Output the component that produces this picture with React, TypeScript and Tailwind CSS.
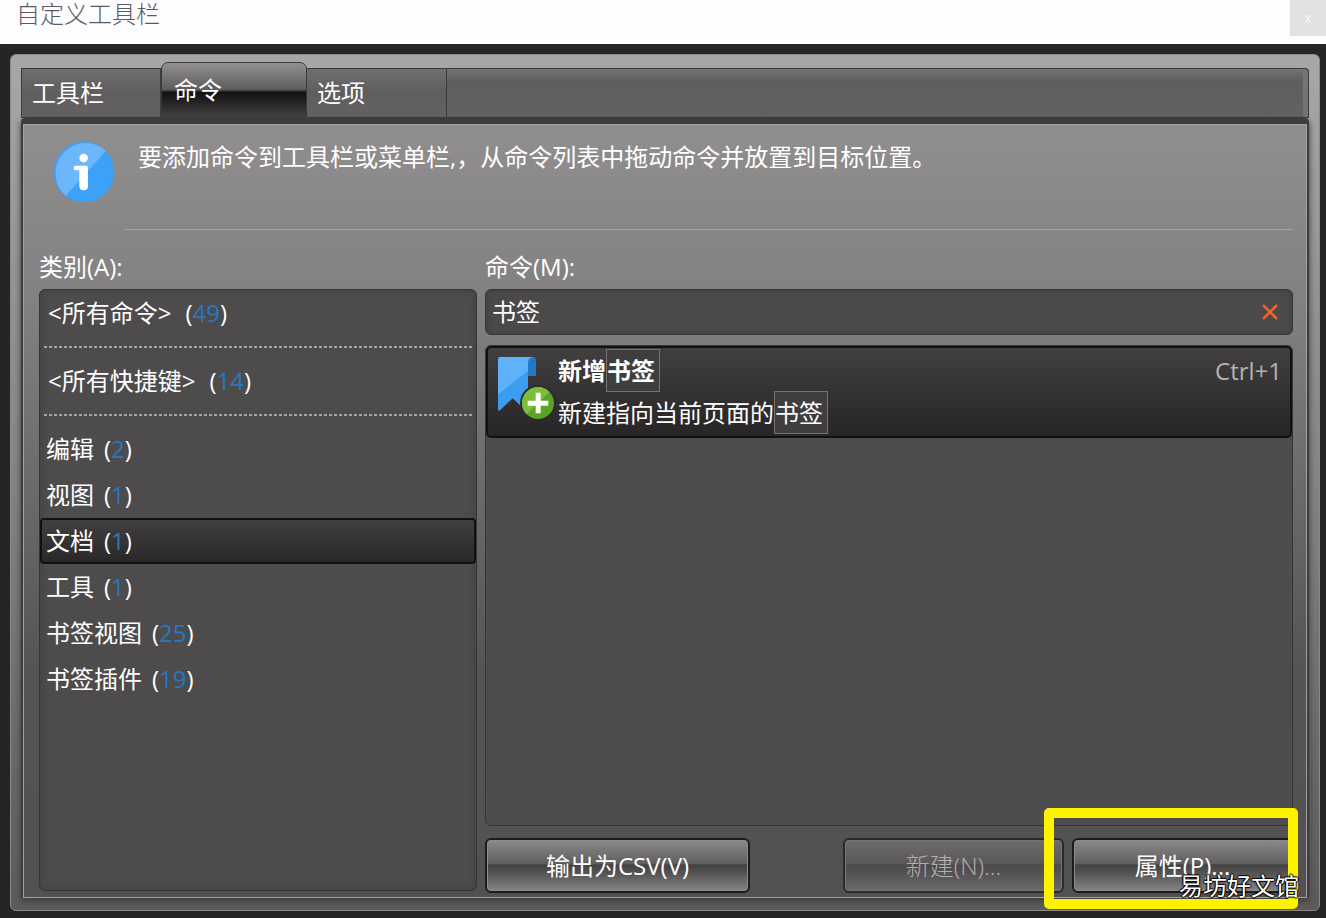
import { useState } from "react"
import clsx from "clsx"

const tabs = ["工具栏", "命令", "选项"]

const allGroups = [
  { name: "<所有命令>", count: 49 },
  { name: "<所有快捷键>", count: 14 },
]

const categories = [
  { name: "编辑", count: 2 },
  { name: "视图", count: 1 },
  { name: "文档", count: 1 },
  { name: "工具", count: 1 },
  { name: "书签视图", count: 25 },
  { name: "书签插件", count: 19 },
]

function InfoIcon() {
  return (
    <svg viewBox="160 423 186 186" className="size-[62px] shrink-0" aria-hidden="true">
      <circle cx="253" cy="516" r="91" fill="#3ba2f8" />
      <path d="M319 452 L198 588 A91 91 0 0 1 319 452 Z" fill="#6cb6fc" />
      <circle cx="252" cy="474" r="13" fill="#fff" />
      <path d="M228 497 H259 Q265 497 265 503 V558 Q265 571 252 571 Q239 571 239 558 V511 H228 Q222 511 222 504 Q222 497 228 497 Z" fill="#fff" />
    </svg>
  )
}

function AddBookmarkIcon() {
  return (
    <svg viewBox="48 42 180 198" className="h-[66px] w-[60px] shrink-0" aria-hidden="true">
      <path d="M143 48 H158 Q168 48 168 60 V105 H143 Z" fill="#2478c8" />
      <path d="M60 48 H158 Q144 50 144 66 V215 L98 172 L60 208 Q54 211 54 205 V56 Q54 48 60 48 Z" fill="#3a9df0" />
      <path d="M60 48 H158 Q144 50 144 66 V90 L54 160 V56 Q54 48 60 48 Z" fill="#5fb2fa" />
      <circle cx="174" cy="186" r="54" fill="#2d2b2b" />
      <circle cx="174" cy="186" r="48" fill="#5aa325" />
      <path d="M140 220 A48 48 0 0 1 208 152 Z" fill="#7bbd3c" />
      <path d="M167 155 H182 V179 H205 V194 H182 V217 H167 V194 H143 V179 H167 Z" fill="#fff" />
    </svg>
  )
}

type CategoryRowProps = {
  name: string
  count: number
  wide?: boolean
  selected: boolean
  onSelect: (name: string) => void
}

function CategoryRow({ name, count, wide, selected, onSelect }: CategoryRowProps) {
  return (
    <button
      type="button"
      aria-pressed={selected}
      onClick={() => onSelect(name)}
      className={clsx(
        "flex h-[46px] w-full items-center rounded-[4px] border-2 text-left whitespace-pre",
        wide ? "gap-3.5 pl-1.5" : "gap-2.5 pl-1",
        selected ? "border-[#121010] bg-linear-to-b from-[#413f40] to-[#292727]" : "border-transparent"
      )}
    >
      <span>{name}</span>
      <span>
        (<span className="text-[#2878c0]">{count}</span>)
      </span>
    </button>
  )
}

function DottedRule() {
  return (
    <div className="flex h-[22px] items-center px-1">
      <div className="h-0.5 w-full bg-[repeating-linear-gradient(90deg,#a5a4a4_0_3px,transparent_3px_5px)]" />
    </div>
  )
}

function Match({ children }: { children: string }) {
  return <mark className="border border-[#747273] bg-[#3f3d3e] py-1 pr-1 text-white">{children}</mark>
}

const glossy =
  "h-[55px] rounded-[6px] border-2 border-[#1d1b1c] bg-[linear-gradient(180deg,#8b898a_0%,#605e5f_46%,#434142_49%,#555354_65%,#858384_100%)] shadow-[inset_0_0_0_1px_#8d8b8c]"

export default function App() {
  const [tab, setTab] = useState("命令")
  const [category, setCategory] = useState("文档")
  const [query, setQuery] = useState("书签")

  return (
    <div className="flex min-h-screen flex-col bg-[#262424] font-['Open_Sans','Noto_Sans_CJK_SC',sans-serif] text-2xl leading-8 text-white">
      <header className="flex h-11 items-start justify-between bg-[#fdfcfe] pl-4">
        <h1 className="leading-7 font-light text-[#5c5a5c]">自定义工具栏</h1>
        <button type="button" aria-label="关闭" className="h-9 w-9 bg-[#e2e1e3] text-sm text-[#f8f8f8]">
          x
        </button>
      </header>

      <main className="mt-2.5 mr-1.5 mb-[7px] ml-2.5 flex grow flex-col rounded-[6px] border border-[#8a8889] bg-linear-to-b from-[#a8a6a8] via-[#858384] to-[#5c5a5b] px-2.5 pt-[7px] pb-3">
        <div role="tablist" className="flex items-end">
          {tabs.map((name) => (
            <button
              key={name}
              type="button"
              role="tab"
              aria-selected={tab === name}
              onClick={() => setTab(name)}
              className={clsx(
                "border text-left",
                tab === name
                  ? "h-14 w-[146px] rounded-t-[7px] border-[#3c3a3b] bg-[linear-gradient(180deg,#929091_0%,#5e5c5d_49%,#141212_54%,#211f20_70%,#444243_100%)] pl-3"
                  : "h-[50px] w-[140px] border-[#3c3a3b] bg-linear-to-b from-[#6f6d6e] via-[#5f5d5e] to-[#636162] pl-2.5 not-first:border-l-0"
              )}
            >
              {name}
            </button>
          ))}
          <div className="h-[50px] grow rounded-tr-[4px] border border-l-0 border-[#3c3a3b] bg-linear-to-b from-[#757374] via-[#5f5d5e] via-25% to-[#636162] shadow-[inset_-5px_0_0_#757374]" />
        </div>

        <section className="flex grow flex-col rounded-t-[4px] border-x-2 border-t-[6px] border-[#3d3b3b] shadow-[0_3px_6px_#3d3b3b]">
          <div className="flex grow flex-col border border-[#a3a1a2] bg-[linear-gradient(180deg,#908e8f_0%,#828081_23%,#565455_70%,#525051_100%)] pr-[13px] pb-1 pl-[15px]">
            <div className="flex gap-[9px] pt-4 pl-3.5">
              <InfoIcon />
              <p className="grow border-b border-[#a5a3a4] pb-14 pl-3.5">
                要添加命令到工具栏或菜单栏,，从命令列表中拖动命令并放置到目标位置。
              </p>
            </div>

            <div className="grid grow grid-cols-[438fr_808fr] gap-x-2 pt-[21px]">
              <div className="flex flex-col pb-0.5">
                <h2 className="pb-1.5">类别(A):</h2>
                <div className="grow rounded-[6px] border border-[#363435] bg-[#4d4b4c] shadow-[inset_0_0_6px_#403e3f]">
                  {allGroups.map((item) => (
                    <div key={item.name}>
                      <CategoryRow {...item} wide selected={category === item.name} onSelect={setCategory} />
                      <DottedRule />
                    </div>
                  ))}
                  {categories.map((item) => (
                    <CategoryRow key={item.name} {...item} selected={category === item.name} onSelect={setCategory} />
                  ))}
                </div>
              </div>

              <div className="flex flex-col">
                <label htmlFor="search" className="pb-1.5">
                  命令(M):
                </label>
                <div className="flex h-[46px] items-center rounded-[6px] border border-[#363435] bg-[#4b494a] shadow-[inset_0_0_6px_#403e3f]">
                  <input
                    id="search"
                    value={query}
                    onChange={(e) => setQuery(e.target.value)}
                    className="min-w-0 grow bg-transparent pl-1.5 outline-none"
                  />
                  <button type="button" aria-label="清除" onClick={() => setQuery("")} className="px-3.5">
                    <svg viewBox="0 0 16 16" className="size-4" aria-hidden="true">
                      <path d="M1 1 L15 15 M15 1 L1 15" stroke="#f0622a" strokeWidth="2.6" />
                    </svg>
                  </button>
                </div>

                <div className="mt-2.5 grow rounded-[6px] border border-[#363435] bg-[#4e4c4d]">
                  <button
                    type="button"
                    className="flex h-[92px] w-full items-start gap-0.5 rounded-[5px] border-2 border-[#121010] bg-linear-to-b from-[#413f40] to-[#272525] pt-[7px] pr-2 pl-2 text-left"
                  >
                    <AddBookmarkIcon />
                    <span className="flex grow flex-col gap-2.5">
                      <span className="font-bold">
                        新增<Match>书签</Match>
                      </span>
                      <span>
                        新建指向当前页面的<Match>书签</Match>
                      </span>
                    </span>
                    <kbd className="font-['Open_Sans',sans-serif] text-[#b5b3b4]">Ctrl+1</kbd>
                  </button>
                </div>

                <div className="mt-3 flex">
                  <button type="button" className={clsx(glossy, "w-[265px]")}>
                    输出为CSV(V)
                  </button>
                  <button
                    type="button"
                    disabled
                    className="mr-2 ml-auto h-[55px] w-[221px] rounded-[6px] border-2 border-[#2b292a] bg-[linear-gradient(180deg,#6d6b6c_0%,#5a5859_46%,#4b494a_49%,#545253_65%,#6b696a_100%)] font-light text-[#b0aeaf] shadow-[inset_0_0_0_1px_#757374]"
                  >
                    新建(N)...
                  </button>
                  <div className="relative">
                    <button type="button" className={clsx(glossy, "w-[221px]")}>
                      属性(P)...
                    </button>
                    <div className="pointer-events-none absolute -top-[30px] -right-[5px] -bottom-4 -left-7 rounded-[5px] border-10 border-[#fff200]" />
                    <span className="pointer-events-none absolute -right-1.5 -bottom-[9px] whitespace-nowrap [text-shadow:1px_0_1px_#000,-1px_0_1px_#000,0_1px_1px_#000,0_-1px_1px_#000]">
                      易坊好文馆
                    </span>
                  </div>
                </div>
              </div>
            </div>
          </div>
        </section>
      </main>
    </div>
  )
}
